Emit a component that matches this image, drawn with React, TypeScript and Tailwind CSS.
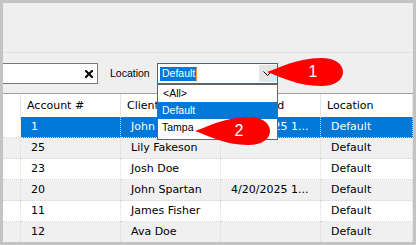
import React from "react";

type Row = { n: string; c: string; d: string; l: string; sel?: boolean };

const rows: Row[] = [
  { n: "1", c: "John Doe", d: "4/20/2025 1...", l: "Default", sel: true },
  { n: "25", c: "Lily Fakeson", d: "", l: "Default" },
  { n: "23", c: "Josh Doe", d: "", l: "Default" },
  { n: "20", c: "John Spartan", d: "4/20/2025 1...", l: "Default" },
  { n: "11", c: "James Fisher", d: "", l: "Default" },
  { n: "12", c: "Ava Doe", d: "", l: "Default" },
];

function Balloon({ label, width, numCenter }: { label: string; width: number; numCenter: number }) {
  const w = width;
  const d = `M0 14 C 12 10, 30 0, ${w - 22} 0 C ${w - 8} 0, ${w} 6, ${w} 14 C ${w} 22, ${w - 8} 28, ${w - 22} 28 C 30 28, 12 18, 0 14 Z`;
  return (
    <div className="relative h-[28px]" style={{ width: w }}>
      <svg width={w} height={28} viewBox={`0 0 ${w} 28`} className="absolute left-0 top-0">
        <path d={d} fill="#fe0000" />
      </svg>
      <span
        className="absolute top-0 h-[28px] w-[16px] flex items-center justify-center text-white text-[16px] leading-none font-['Liberation_Sans',Arial,sans-serif]"
        style={{ left: numCenter - 8 }}
      >
        {label}
      </span>
    </div>
  );
}

export default function App() {
  const cell = "h-full flex items-center pb-[2px] border-r border-b border-dotted border-[#d6d6d6] overflow-hidden whitespace-nowrap";
  return (
    <div className="relative w-[416px] h-[245px] bg-[#c3c3c3] p-[3px] overflow-hidden">
      <div className="w-[410px] h-[239px] bg-[#efefef] flex flex-col overflow-hidden">
        <div className="h-[49px] shrink-0" />
        <div className="h-px bg-[#dce3ea] shrink-0" />
        <div className="h-[10px] shrink-0" />
        {/* toolbar */}
        <div className="flex items-center h-[21px] shrink-0 font-['Liberation_Sans',Arial,sans-serif] text-[10.5px] text-black">
          <div className="ml-[-40px] w-[135px] h-[21px] shrink-0 border border-[#7a7a7a] bg-white flex items-center justify-end pr-[4px]">
            <svg width="8" height="8" viewBox="0 0 8 8">
              <path d="M1 1 L7 7 M7 1 L1 7" stroke="#000" strokeWidth="2" strokeLinecap="square" />
            </svg>
          </div>
          <span className="ml-[12px] w-[47px] shrink-0 leading-none pb-[1px]">Location</span>
          <div className="relative w-[121px] h-[21px] shrink-0 border border-[#0078d7] bg-white flex items-center pl-[2px]">
            <div className="flex items-center h-[14px] bg-[#0078d7] text-white pl-[2px] leading-none pb-[2px]">
              <span className="pt-[1px]">Default</span>
              <span className="ml-[1px] w-px h-[14px] bg-[#f39a45] self-start mt-[1px]" />
            </div>
            <div className="absolute right-0 top-[1px] w-[18px] h-[17px] bg-[#e5e5e5] flex items-center justify-center pr-[2px]">
              <svg width="9" height="5" viewBox="0 0 9 5">
                <path d="M0.5 0.5 L4.5 4.5 L8.5 0.5" stroke="#000" strokeWidth="1" fill="none" />
              </svg>
            </div>
          </div>
        </div>
        <div className="h-[9px] shrink-0" />
        {/* grid */}
        <div className="flex flex-col border-t border-[#a0a0a0] bg-white font-['DejaVu_Sans',Verdana,sans-serif] text-[11px] text-black">
          <div className="flex h-[23px] shrink-0 bg-white">
            <div className="w-[18px] h-full border-r border-[#e5e5e5]" />
            <div className="w-[100px] h-full border-r border-[#e5e5e5] flex items-center pl-[6px] leading-none">Account #</div>
            <div className="w-[100px] h-full border-r border-[#e5e5e5] flex items-center pl-[6px] leading-none">Client</div>
            <div className="w-[100px] h-full border-r border-[#e5e5e5] flex items-center pl-[6px] leading-none whitespace-nowrap">Date Used</div>
            <div className="w-[92px] h-full border-r border-[#e5e5e5] flex items-center pl-[6px] leading-none">Location</div>
          </div>
          {rows.map((r, i) => {
            const bg = r.sel ? "bg-[#0078d7] text-white" : i % 2 === 1 ? "bg-[#f0f0f0]" : "bg-white";
            return (
              <div key={r.n} className={`flex h-[21px] shrink-0 leading-none ${r.sel ? "" : bg}`}>
                <div className={`w-[18px] ${cell} ${r.sel ? "bg-white" : ""}`} />
                <div className={`w-[100px] pl-[10px] ${cell} ${r.sel ? bg : ""}`}>{r.n}</div>
                <div className={`w-[100px] pl-[10px] ${cell} ${r.sel ? bg : ""}`}>{r.c}</div>
                <div className={`w-[100px] pl-[10px] ${cell} ${r.sel ? bg : ""}`}>{r.d}</div>
                <div className={`w-[92px] pl-[10px] ${cell} ${r.sel ? bg : ""}`}>{r.l}</div>
              </div>
            );
          })}
        </div>
      </div>

      {/* dropdown list overlay */}
      <div className="absolute left-[157px] top-[84px] w-[121px] h-[56px] border border-[#646464] bg-white font-['Liberation_Sans',Arial,sans-serif] text-[10.5px] text-black leading-none">
        <div className="h-[17px] flex items-center pl-[5px] pb-[1px]">&lt;All&gt;</div>
        <div className="h-[17px] flex items-center pl-[4px] pb-[1px] bg-[#0078d7] text-white">Default</div>
        <div className="h-[17px] flex items-center pl-[4px] pb-[1px]">Tampa</div>
      </div>

      {/* callouts */}
      <div className="absolute left-[267px] top-[58px]">
        <Balloon label="1" width={76} numCenter={46} />
      </div>
      <div className="absolute left-[195px] top-[117px]">
        <Balloon label="2" width={75} numCenter={44} />
      </div>
    </div>
  );
}
